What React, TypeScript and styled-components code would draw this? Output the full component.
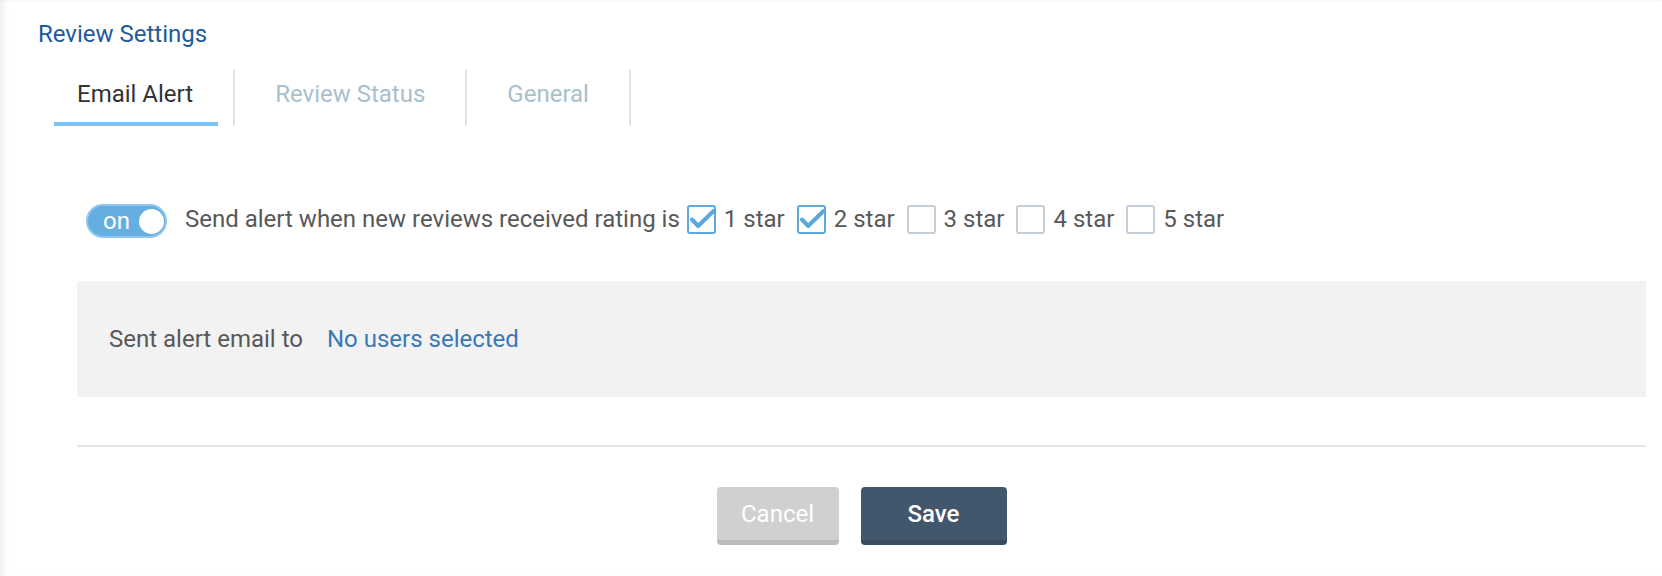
import React from "react";
import styled, { createGlobalStyle } from "styled-components";

const GlobalStyle = createGlobalStyle`
  html, body {
    margin: 0;
    padding: 0;
    background: #ffffff;
  }
  body {
    font-family: Roboto, "Noto Sans", "Liberation Sans", Arial, sans-serif;
    -webkit-font-smoothing: antialiased;
  }
  * { box-sizing: border-box; }
`;

const Page = styled.div`
  min-height: 576px;
  padding: 20px 16px 0 37px;
  background: #ffffff;
  box-shadow: inset 8px 0 9px -6px rgba(0, 0, 0, 0.09),
    inset 0 2px 2px -1px rgba(0, 0, 0, 0.03);
`;

const Title = styled.h1`
  margin: 0;
  padding-left: 1px;
  font-size: 24px;
  line-height: 28px;
  font-weight: 400;
  color: #1f5a9b;
`;

const TabBar = styled.ul`
  display: flex;
  margin: 22px 0 0;
  padding: 0;
  list-style: none;
`;

const Tab = styled.li`
  display: flex;
  padding: 0 15px 0 17px;
  border-right: 2px solid #e2e2e2;
`;

const TabLabel = styled.span<{ $active?: boolean }>`
  padding: 10px 25px 14px 23px;
  font-size: 24px;
  line-height: 28px;
  color: ${(p) => (p.$active ? "#333333" : "#a8bfce")};
  border-bottom: 4px solid ${(p) => (p.$active ? "#7cc4f6" : "transparent")};
  cursor: pointer;
`;

const Content = styled.div`
  margin-left: 40px;
`;

const AlertRow = styled.div`
  display: flex;
  align-items: center;
  margin-top: 74px;
  padding-left: 9px;
  font-size: 24px;
  line-height: 28px;
  color: #585858;
`;

const Toggle = styled.div`
  display: flex;
  align-items: center;
  justify-content: space-between;
  width: 81px;
  height: 34px;
  margin-top: 4px;
  padding: 0 1px 0 15px;
  border-radius: 17px;
  background: #65aee2;
  border: 2px solid #8fc6ec;
  color: #ffffff;
  font-size: 24px;
  line-height: 28px;
`;

const Knob = styled.span`
  width: 25px;
  height: 25px;
  border-radius: 50%;
  background: #ffffff;
`;

const AlertText = styled.span`
  margin-left: 18px;
  margin-right: 7px;
`;

const CheckItem = styled.label`
  display: flex;
  align-items: center;
  margin-right: 12px;
`;

const Box = styled.span<{ $checked?: boolean }>`
  position: relative;
  width: 29px;
  height: 29px;
  border-radius: 3px;
  border: 2px solid ${(p) => (p.$checked ? "#5ea9dc" : "#c3ced8")};
  background: #ffffff;
`;

const CheckMark = styled.svg`
  position: absolute;
  left: -2px;
  top: -2px;
`;

const StarLabel = styled.span`
  margin-left: 8px;
`;

const Panel = styled.div`
  display: flex;
  align-items: center;
  height: 116px;
  margin-top: 43px;
  padding-left: 32px;
  background: #f2f2f2;
  font-size: 24px;
  line-height: 28px;
  color: #585858;
`;

const UsersLink = styled.a`
  margin-left: 24px;
  color: #3a78b6;
  text-decoration: none;
  cursor: pointer;
`;

const Separator = styled.hr`
  margin: 48px 0 0;
  height: 2px;
  border: none;
  background: #e6e6e6;
`;

const ButtonRow = styled.div`
  display: flex;
  justify-content: center;
  gap: 22px;
  margin-top: 40px;
`;

const Button = styled.button<{ $primary?: boolean; $w: number }>`
  width: ${(p) => p.$w}px;
  height: 58px;
  border: none;
  border-radius: 4px;
  border-bottom: 5px solid ${(p) => (p.$primary ? "#394b5e" : "#bcbcbc")};
  background: ${(p) => (p.$primary ? "#43576c" : "#d0d0d0")};
  color: #ffffff;
  font-family: Roboto, "Noto Sans", "Liberation Sans", Arial, sans-serif;
  font-size: 24px;
  font-weight: ${(p) => (p.$primary ? 500 : 400)};
  line-height: 28px;
  padding: 0;
  cursor: pointer;
`;

const Check = ({ checked, label }: { checked: boolean; label: string }) => (
  <CheckItem>
    <Box $checked={checked}>
      {checked && (
        <CheckMark width="29" height="29" viewBox="0 0 29 29">
          <path
            d="M5 14.5 L11.2 21 L26.5 6"
            fill="none"
            stroke="#5aa7dd"
            strokeWidth="4"
            strokeLinecap="round"
            strokeLinejoin="round"
          />
        </CheckMark>
      )}
    </Box>
    <StarLabel>{label}</StarLabel>
  </CheckItem>
);

export default function App() {
  const stars = [
    { label: "1 star", checked: true },
    { label: "2 star", checked: true },
    { label: "3 star", checked: false },
    { label: "4 star", checked: false },
    { label: "5 star", checked: false },
  ];
  return (
    <>
      <GlobalStyle />
      <Page>
        <Title>Review Settings</Title>
        <TabBar>
          <Tab>
            <TabLabel $active>Email Alert</TabLabel>
          </Tab>
          <Tab>
            <TabLabel>Review Status</TabLabel>
          </Tab>
          <Tab>
            <TabLabel>General</TabLabel>
          </Tab>
        </TabBar>
        <Content>
          <AlertRow>
            <Toggle>
              <span>on</span>
              <Knob />
            </Toggle>
            <AlertText>Send alert when new reviews received rating is</AlertText>
            {stars.map((s) => (
              <Check key={s.label} checked={s.checked} label={s.label} />
            ))}
          </AlertRow>
          <Panel>
            <span>Sent alert email to</span>
            <UsersLink>No users selected</UsersLink>
          </Panel>
          <Separator />
          <ButtonRow>
            <Button $w={122}>Cancel</Button>
            <Button $primary $w={146}>
              Save
            </Button>
          </ButtonRow>
        </Content>
      </Page>
    </>
  );
}
